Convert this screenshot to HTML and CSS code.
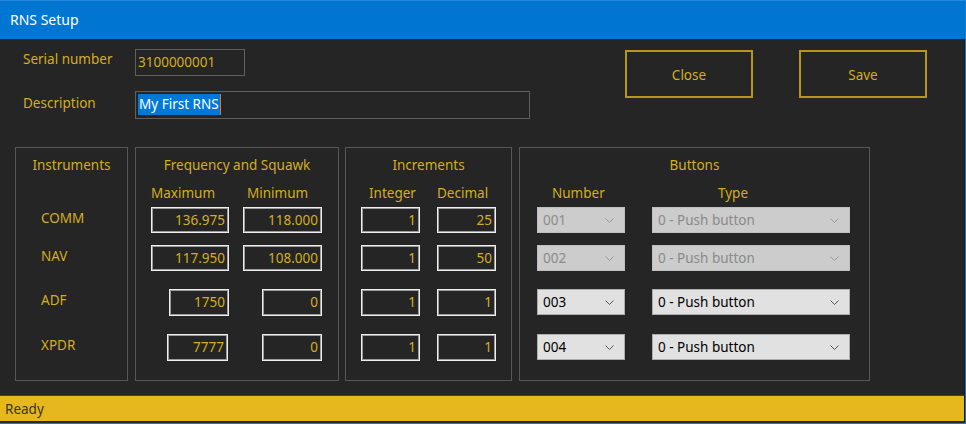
FILE: index.html
```html
<!DOCTYPE html>
<html>
<head>
<meta charset="utf-8">
<title>RNS Setup</title>
<link rel="stylesheet" href="styles.css">
</head>
<body>
<div class="window">
  <div class="titlebar">RNS Setup</div>
  <div class="content">
    <div class="top">
      <div class="fields">
        <div class="flabel l1">Serial number</div>
        <div class="tbox serial">3100000001</div>
        <div class="flabel l2">Description</div>
        <div class="tbox desc"><span class="sel">My First RNS</span><span class="caret"></span></div>
      </div>
      <div class="actions">
        <div class="btn">Close</div>
        <div class="btn">Save</div>
      </div>
    </div>

    <div class="groups">
      <div class="group g-inst">
        <div class="gtitle">Instruments</div>
        <div class="ggrid">
          <div class="hdr"></div>
          <div class="rlabel">COMM</div>
          <div class="rlabel">NAV</div>
          <div class="rlabel">ADF</div>
          <div class="rlabel">XPDR</div>
        </div>
      </div>

      <div class="group g-freq">
        <div class="gtitle">Frequency and Squawk</div>
        <div class="ggrid">
          <div class="hdr h-max">Maximum</div>
          <div class="hdr h-min">Minimum</div>
          <div class="num r12">136.975</div>
          <div class="num r12">118.000</div>
          <div class="num r12">117.950</div>
          <div class="num r12">108.000</div>
          <div class="num r34 w60">1750</div>
          <div class="num r34 w60">0</div>
          <div class="num r34 w61">7777</div>
          <div class="num r34 w60">0</div>
        </div>
      </div>

      <div class="group g-inc">
        <div class="gtitle">Increments</div>
        <div class="ggrid">
          <div class="hdr h-int">Integer</div>
          <div class="hdr h-dec">Decimal</div>
          <div class="num r12">1</div>
          <div class="num r12">25</div>
          <div class="num r12">1</div>
          <div class="num r12">50</div>
          <div class="num r34">1</div>
          <div class="num r34">1</div>
          <div class="num r34">1</div>
          <div class="num r34">1</div>
        </div>
      </div>

      <div class="group g-btn">
        <div class="gtitle">Buttons</div>
        <div class="ggrid">
          <div class="hdr h-numb">Number</div>
          <div class="hdr h-type">Type</div>
          <div class="combo disabled"><span>001</span><svg class="chev" width="9" height="5" viewBox="0 0 9 5"><polyline points="0.5,0.5 4.5,4.5 8.5,0.5" fill="none" stroke="currentColor" stroke-width="1"/></svg></div>
          <div class="combo disabled"><span>0 - Push button</span><svg class="chev" width="9" height="5" viewBox="0 0 9 5"><polyline points="0.5,0.5 4.5,4.5 8.5,0.5" fill="none" stroke="currentColor" stroke-width="1"/></svg></div>
          <div class="combo disabled"><span>002</span><svg class="chev" width="9" height="5" viewBox="0 0 9 5"><polyline points="0.5,0.5 4.5,4.5 8.5,0.5" fill="none" stroke="currentColor" stroke-width="1"/></svg></div>
          <div class="combo disabled"><span>0 - Push button</span><svg class="chev" width="9" height="5" viewBox="0 0 9 5"><polyline points="0.5,0.5 4.5,4.5 8.5,0.5" fill="none" stroke="currentColor" stroke-width="1"/></svg></div>
          <div class="combo"><span>003</span><svg class="chev" width="9" height="5" viewBox="0 0 9 5"><polyline points="0.5,0.5 4.5,4.5 8.5,0.5" fill="none" stroke="currentColor" stroke-width="1"/></svg></div>
          <div class="combo"><span>0 - Push button</span><svg class="chev" width="9" height="5" viewBox="0 0 9 5"><polyline points="0.5,0.5 4.5,4.5 8.5,0.5" fill="none" stroke="currentColor" stroke-width="1"/></svg></div>
          <div class="combo"><span>004</span><svg class="chev" width="9" height="5" viewBox="0 0 9 5"><polyline points="0.5,0.5 4.5,4.5 8.5,0.5" fill="none" stroke="currentColor" stroke-width="1"/></svg></div>
          <div class="combo"><span>0 - Push button</span><svg class="chev" width="9" height="5" viewBox="0 0 9 5"><polyline points="0.5,0.5 4.5,4.5 8.5,0.5" fill="none" stroke="currentColor" stroke-width="1"/></svg></div>
        </div>
      </div>
    </div>

    <div class="status">Ready</div>
  </div>
</div>
</body>
</html>
```
FILE: styles.css
```css
* { box-sizing: border-box; }
html, body { margin: 0; padding: 0; }
body {
  width: 966px;
  height: 424px;
  overflow: hidden;
  background: #252525;
  font-family: "Noto Sans", "Open Sans", sans-serif;
  font-size: 13.5px;
  color: #d4ae20;
}
.window {
  width: 966px;
  height: 424px;
  display: flex;
  flex-direction: column;
  background: #252525;
  border-right: 1px solid #1e78c8;
  border-bottom: 1px solid #1e78c8;
}
.titlebar {
  height: 39px;
  flex: none;
  background: #0076d3;
  border-top: 1px solid #2a88da;
  color: #ffffff;
  font-size: 14px;
  line-height: 38px;
  padding-left: 10px;
}
.content {
  flex: 1;
  display: flex;
  flex-direction: column;
  border-right: 1px solid #1a1a1a;
}
.top {
  height: 108px;
  flex: none;
  display: flex;
  padding: 10px 0 0 23px;
}
.fields {
  width: 507px;
  display: grid;
  grid-template-columns: 112px 1fr;
  grid-template-rows: 27px 28px;
  row-gap: 15px;
  align-content: start;
}
.flabel {
  line-height: 16px;
  align-self: start;
}
.l1 { padding-top: 2px; }
.l2 { padding-top: 4px; }
.tbox {
  border: 1px solid #5f5f5f;
  line-height: 20px;
  padding: 0 2px;
  display: flex;
  align-items: center;
  color: #d4ae20;
  white-space: nowrap;
}
.serial { width: 110px; padding-bottom: 2px; }
.desc { width: 395px; padding-bottom: 1px; }
.sel {
  background: #0078d7;
  color: #ffffff;
  line-height: 21px;
  padding: 0 1px;
}
.caret {
  display: inline-block;
  width: 1px;
  height: 21px;
  background: #e07a1a;
}
.actions {
  display: flex;
  gap: 46px;
  margin-left: 95px;
  padding-top: 1px;
}
.btn {
  width: 128px;
  height: 48px;
  border: 2px solid #b8951f;
  display: flex;
  align-items: center;
  justify-content: center;
  color: #d4ae20;
  padding-top: 1px;
}
.groups {
  height: 234px;
  flex: none;
  display: flex;
  padding-left: 15px;
}
.group {
  height: 234px;
  border: 1px solid #575757;
  padding-top: 9px;
  display: flex;
  flex-direction: column;
}
.g-inst { width: 113px; margin-right: 7px; }
.g-freq { width: 204px; margin-right: 6px; }
.g-inc { width: 167px; margin-right: 7px; }
.g-btn { width: 351px; }
.gtitle {
  text-align: center;
  line-height: 16px;
  margin-bottom: 12px;
}
.ggrid {
  display: grid;
  grid-template-rows: 22px 38px 44px 45px 27px;
  align-items: start;
}
.hdr {
  line-height: 16px;
  padding-top: 0;
  white-space: nowrap;
}
.g-inst .ggrid { grid-template-columns: 1fr; padding-left: 25px; }
.rlabel { line-height: 22px; }
.g-freq .ggrid {
  grid-template-columns: 78px 79px;
  column-gap: 14px;
  padding-left: 15px;
}
.h-min { padding-left: 4px; }
.g-inc .ggrid {
  grid-template-columns: 59px 59px;
  column-gap: 17px;
  padding-left: 15px;
}
.h-int { padding-left: 8px; }
.g-btn .ggrid {
  grid-template-columns: 88px 198px;
  column-gap: 27px;
  padding-left: 17px;
}
.h-numb { padding-left: 15px; }
.h-type { padding-left: 66px; }
.num {
  border: 1px solid #eeeeee;
  box-shadow: inset 0 0 0 1px #9a9a9a;
  text-align: right;
  padding: 1px 3px 0 2px;
  color: #d4ae20;
  justify-self: stretch;
}
.r12 { height: 26px; line-height: 22px; }
.r34 { height: 27px; line-height: 23px; }
.w60 { width: 60px; justify-self: end; }
.w61 { width: 61px; justify-self: end; margin-right: 1px; }
.combo {
  height: 26px;
  background: #e1e1e1;
  border: 1px solid #adadad;
  color: #000000;
  display: flex;
  align-items: center;
  justify-content: space-between;
  padding: 0 10px 0 5px;
  white-space: nowrap;
}
.combo .chev { color: #555555; }
.combo.disabled {
  background: #cccccc;
  border-color: #bfbfbf;
  color: #8a8a8a;
}
.combo.disabled .chev { color: #999999; }
.status {
  margin-top: 14px;
  height: 28px;
  flex: none;
  background: #e6b81e;
  border-top: 1px solid #4a4222;
  border-bottom: 2px solid #2a2a2a;
  color: #3a3520;
  line-height: 26px;
  padding-left: 5px;
}
```
